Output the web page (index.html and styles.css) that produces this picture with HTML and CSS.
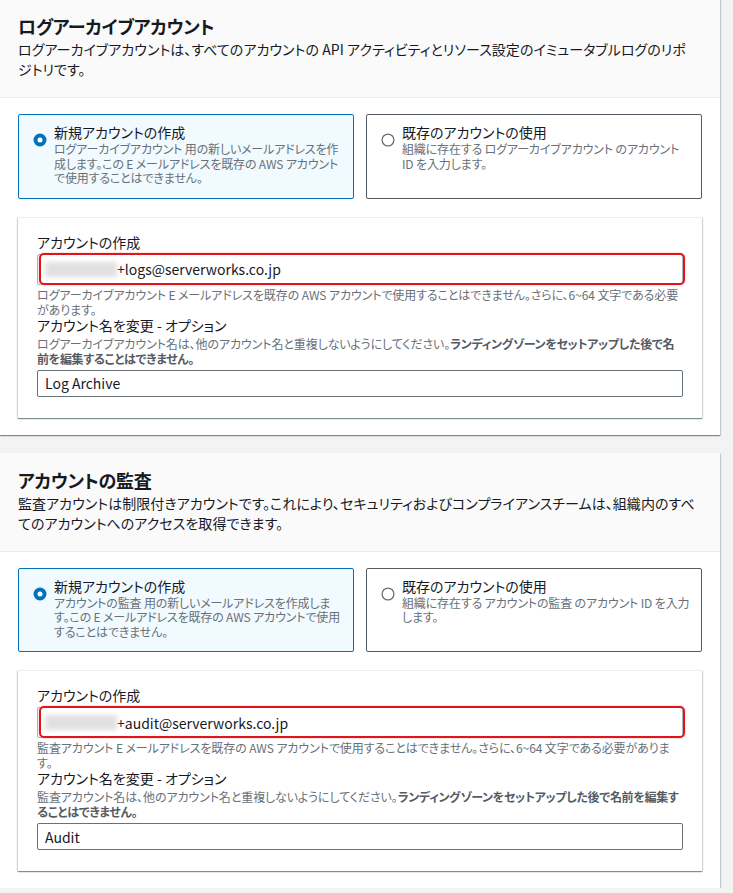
FILE: index.html
```html
<!DOCTYPE html>
<html lang="ja">
<head>
<meta charset="utf-8">
<title>ランディングゾーン設定</title>
<link rel="stylesheet" href="styles.css">
</head>
<body>
<div class="page">
  <section class="panel first">
    <header class="panel-head">
      <h2 class="panel-title">ログアーカイブアカウント</h2>
      <p class="panel-desc">ログアーカイブアカウントは、すべてのアカウントの API アクティビティとリソース設定のイミュータブルログのリポジトリです。</p>
    </header>
    <div class="panel-body">
      <div class="tiles">
        <div class="tile selected">
          <svg class="radio" width="14" height="14" viewBox="0 0 14 14"><circle cx="7" cy="7" r="6.5" fill="#0073bb"/><circle cx="7" cy="7" r="2.5" fill="#fff"/></svg>
          <div class="tile-text">
            <div class="tile-label">新規アカウントの作成</div>
            <div class="tile-desc">ログアーカイブアカウント 用の新しいメールアドレスを作成します。この E メールアドレスを既存の AWS アカウントで使用することはできません。</div>
          </div>
        </div>
        <div class="tile">
          <svg class="radio" width="14" height="14" viewBox="0 0 14 14"><circle cx="7" cy="7" r="5.9" fill="#fff" stroke="#687078" stroke-width="1.3"/></svg>
          <div class="tile-text">
            <div class="tile-label">既存のアカウントの使用</div>
            <div class="tile-desc">組織に存在する ログアーカイブアカウント のアカウント ID を入力します。</div>
          </div>
        </div>
      </div>
      <div class="form-box">
        <div class="field-label">アカウントの作成</div>
        <div class="input email">
          <span class="blur"></span><span>+logs@serverworks.co.jp</span>
          <span class="mark"></span>
        </div>
        <div class="help">ログアーカイブアカウント E メールアドレスを既存の AWS アカウントで使用することはできません。さらに、6~64 文字である必要があります。</div>
        <div class="field-label second">アカウント名を変更 - オプション</div>
        <div class="desc">ログアーカイブアカウント名は、他のアカウント名と重複しないようにしてください。<b>ランディングゾーンをセットアップした後で名前を編集することはできません。</b></div>
        <div class="input name">Log Archive</div>
      </div>
    </div>
  </section>

  <section class="panel">
    <header class="panel-head">
      <h2 class="panel-title">アカウントの監査</h2>
      <p class="panel-desc">監査アカウントは制限付きアカウントです。これにより、セキュリティおよびコンプライアンスチームは、組織内のすべてのアカウントへのアクセスを取得できます。</p>
    </header>
    <div class="panel-body">
      <div class="tiles">
        <div class="tile selected">
          <svg class="radio" width="14" height="14" viewBox="0 0 14 14"><circle cx="7" cy="7" r="6.5" fill="#0073bb"/><circle cx="7" cy="7" r="2.5" fill="#fff"/></svg>
          <div class="tile-text">
            <div class="tile-label">新規アカウントの作成</div>
            <div class="tile-desc">アカウントの監査 用の新しいメールアドレスを作成します。この E メールアドレスを既存の AWS アカウントで使用することはできません。</div>
          </div>
        </div>
        <div class="tile">
          <svg class="radio" width="14" height="14" viewBox="0 0 14 14"><circle cx="7" cy="7" r="5.9" fill="#fff" stroke="#687078" stroke-width="1.3"/></svg>
          <div class="tile-text">
            <div class="tile-label">既存のアカウントの使用</div>
            <div class="tile-desc">組織に存在する アカウントの監査 のアカウント ID を入力します。</div>
          </div>
        </div>
      </div>
      <div class="form-box">
        <div class="field-label">アカウントの作成</div>
        <div class="input email">
          <span class="blur"></span><span>+audit@serverworks.co.jp</span>
          <span class="mark"></span>
        </div>
        <div class="help">監査アカウント E メールアドレスを既存の AWS アカウントで使用することはできません。さらに、6~64 文字である必要があります。</div>
        <div class="field-label second">アカウント名を変更 - オプション</div>
        <div class="desc">監査アカウント名は、他のアカウント名と重複しないようにしてください。<b>ランディングゾーンをセットアップした後で名前を編集することはできません。</b></div>
        <div class="input name">Audit</div>
      </div>
    </div>
  </section>
</div>
</body>
</html>
```
FILE: styles.css
```css
html, body {
  margin: 0;
  padding: 0;
}
body {
  background: #f2f3f3;
  font-family: "Noto Sans CJK JP", "Noto Sans", sans-serif;
  font-feature-settings: "palt";
  color: #16191f;
  overflow: hidden;
}
.page {
  width: 720px;
  display: flex;
  flex-direction: column;
  gap: 18px;
}
.panel {
  background: #fff;
  box-shadow: 0 1px 1px 0 rgba(0,28,36,.3), 1px 1px 1px 0 rgba(0,28,36,.15), -1px 1px 1px 0 rgba(0,28,36,.15);
}
.panel.first {
  margin-top: -1px;
}
.panel-head {
  background: #fafafa;
  border-bottom: 1px solid #eaeded;
  padding: 14px 22px 18px 18px;
}
.panel-title {
  margin: 0;
  font-size: 18px;
  line-height: 26px;
  font-weight: 700;
  letter-spacing: -0.3px;
}
.panel-desc {
  margin: 0;
  font-size: 14px;
  line-height: 20px;
  color: #16191f;
  letter-spacing: 0.05px;
}
.panel-body {
  padding: 16px 18px 17px 18px;
  display: flex;
  flex-direction: column;
  gap: 18px;
}
.tiles {
  display: grid;
  grid-template-columns: 1fr 1fr;
  gap: 12px;
}
.tile {
  border: 1px solid #545b64;
  border-radius: 2px;
  display: flex;
  gap: 7px;
  padding: 8px 8px 12px 14px;
  min-height: 61px;
}
.tile.selected {
  border-color: #0073bb;
  background: #f1faff;
}
.radio {
  flex: none;
  margin-top: 10px;
}
.tile-label {
  font-size: 14px;
  line-height: 18px;
}
.tile-desc {
  font-size: 12px;
  line-height: 14.5px;
  color: #687078;
  margin-top: 1px;
  letter-spacing: -0.15px;
}
.form-box {
  box-shadow: 0 1px 1px 0 rgba(0,28,36,.3), 1px 1px 1px 0 rgba(0,28,36,.15), -1px 1px 1px 0 rgba(0,28,36,.15);
  border-top: 1px solid #eaeded;
  padding: 14px 19px 21px 19px;
  display: flex;
  flex-direction: column;
}
.field-label {
  font-size: 14px;
  line-height: 20px;
}
.field-label.second {
  line-height: 17px;
}
.input {
  position: relative;
  box-sizing: border-box;
  border: 1px solid #687078;
  border-radius: 2px;
  padding: 0 7px;
  font-size: 14px;
  display: flex;
  align-items: center;
  background: #fff;
}
.input.email {
  margin-top: 2px;
  height: 31px;
  border-color: #aab7b8;
}
.input.name {
  margin-top: 4px;
  height: 27px;
}
.blur {
  display: inline-block;
  width: 72px;
  height: 15px;
  background: #e0e0e0;
  filter: blur(2.5px);
}
.mark {
  position: absolute;
  left: 1px;
  right: -3px;
  top: -2px;
  bottom: -1px;
  border: 2px solid #e3131b;
  border-radius: 5px;
  box-shadow: 0 0 2px rgba(200,0,0,.35);
}
.help {
  margin-top: 2px;
  font-size: 12px;
  line-height: 15px;
  color: #687078;
  letter-spacing: -0.1px;
}
.desc {
  margin-top: 2px;
  font-size: 12px;
  line-height: 15px;
  color: #687078;
  letter-spacing: -0.1px;
}
.desc b {
  font-weight: 700;
  color: #545b64;
  letter-spacing: -0.3px;
}
```
